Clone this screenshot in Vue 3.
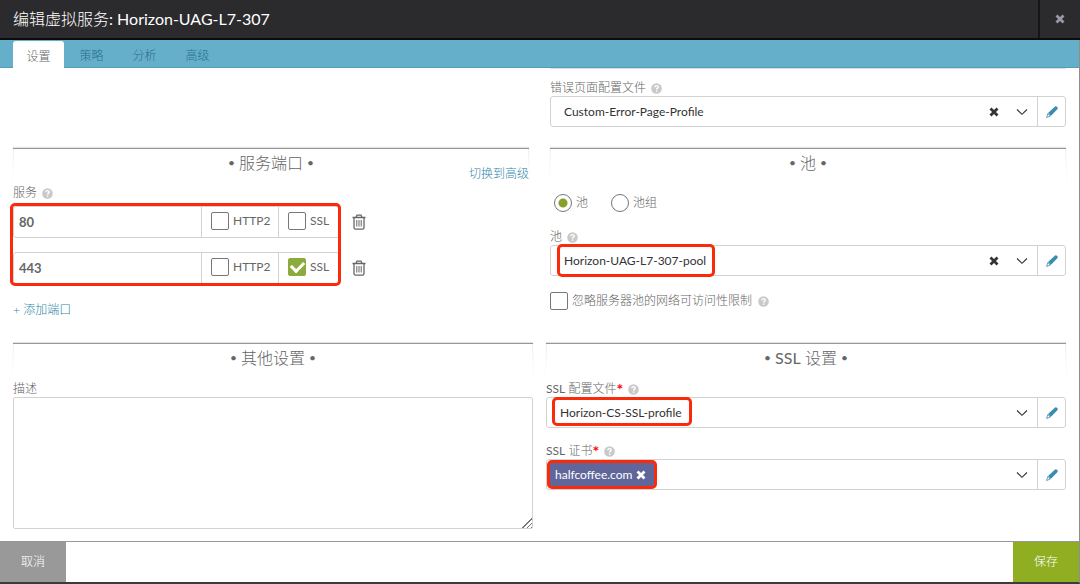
<script setup>
import { ref, reactive, h } from 'vue'

const tabs = ['设置', '策略', '分析', '高级']
const activeTab = ref('设置')
const ports = reactive([
  { port: '80', http2: false, ssl: false },
  { port: '443', http2: false, ssl: true },
])
const poolKind = ref('pool')
const ignoreReach = ref(false)
const description = ref('')

const stroke = (d, w) => h('path', { d, fill: 'none', stroke: 'currentColor', 'stroke-width': w })
const svg = (cls, size, kids) =>
  h('svg', { class: cls, width: size[0], height: size[1], viewBox: `0 0 ${size[0]} ${size[1]}`, 'aria-hidden': 'true' }, kids)

const HelpIcon = () =>
  svg('help', [11, 11], [
    h('circle', { cx: 5.5, cy: 5.5, r: 5.3, fill: '#c9c9c9' }),
    h('path', { d: 'M3.8 4.3C3.9 2 7.3 2.1 7.2 4.1C7.1 5.2 5.6 5.2 5.6 6.5', fill: 'none', stroke: '#fff', 'stroke-width': 1.4 }),
    h('rect', { x: 4.9, y: 7.4, width: 1.4, height: 1.4, fill: '#fff' }),
  ])
const CrossIcon = () => svg('cross', [10, 10], [stroke('M1.5 1.5L8.5 8.5M8.5 1.5L1.5 8.5', 2.8)])
const ChevronIcon = () => svg('chevron', [12, 8], [stroke('M1 1.5L6 6.3L11 1.5', 1.1)])
const PencilIcon = () =>
  svg('pencil', [12, 12], [
    h('path', { d: 'M2 7L8.5 0.9C9.4 0.1 10.4 0.2 11.2 1C12 1.8 11.9 2.7 11.1 3.6L4.8 10Z', fill: 'currentColor' }),
    h('path', { d: 'M1.8 7.6L4.2 10.1L0.6 11.5Z', fill: '#fff', stroke: 'currentColor', 'stroke-width': 0.8 }),
  ])
const TrashIcon = () =>
  svg('trash', [14, 16], [
    stroke('M0.5 3.5H13.5M4 3.2L5 1.2H9L10 3.2M2 4V13.5C2 14.6 2.6 15.2 3.6 15.2H10.4C11.4 15.2 12 14.6 12 13.5V4', 1.3),
    stroke('M4.8 6V12.5M7 6V12.5M9.2 6V12.5', 1),
  ])
</script>

<template>
  <div class="dialog">
    <header class="titlebar">
      <h1><span>编辑虚拟服务</span>: Horizon-UAG-L7-307</h1>
      <button type="button" class="close" aria-label="关闭"><CrossIcon /></button>
    </header>

    <nav class="tabs">
      <button
        v-for="t in tabs"
        :key="t"
        type="button"
        :class="{ active: t === activeTab }"
        @click="activeTab = t"
      >{{ t }}</button>
    </nav>

    <main class="body">
      <div class="row">
        <div></div>
        <div class="profile">
          <label class="caption" for="error-page">错误页面配置文件<HelpIcon /></label>
          <div class="field">
            <select id="error-page"><option>Custom-Error-Page-Profile</option></select>
            <button type="button" class="clear" aria-label="清除"><CrossIcon /></button>
            <ChevronIcon />
            <button type="button" class="edit" aria-label="编辑"><PencilIcon /></button>
          </div>
        </div>
      </div>

      <div class="row middle">
        <section>
          <div class="heading">
            <h2><i>•</i>服务端口<i>•</i></h2>
            <a href="#">切换到高级</a>
          </div>
          <div class="caption services">服务<HelpIcon /></div>
          <div class="ports">
            <div v-for="(p, i) in ports" :key="i" class="port-row">
              <div class="port">
                <input v-model="p.port" type="text" aria-label="服务端口" />
                <label class="http2"><input v-model="p.http2" type="checkbox" />HTTP2</label>
                <label class="ssl"><input v-model="p.ssl" type="checkbox" />SSL</label>
              </div>
              <button type="button" class="remove" aria-label="删除"><TrashIcon /></button>
            </div>
            <span class="mark mark-ports"></span>
          </div>
          <a href="#" class="add">+ 添加端口</a>
        </section>

        <section>
          <div class="heading"><h2><i>•</i>池<i>•</i></h2></div>
          <div class="radios">
            <label><input v-model="poolKind" type="radio" value="pool" />池</label>
            <label><input v-model="poolKind" type="radio" value="group" />池组</label>
          </div>
          <label class="caption" for="pool">池<HelpIcon /></label>
          <div class="field">
            <select id="pool"><option>Horizon-UAG-L7-307-pool</option></select>
            <button type="button" class="clear" aria-label="清除"><CrossIcon /></button>
            <ChevronIcon />
            <button type="button" class="edit" aria-label="编辑"><PencilIcon /></button>
            <span class="mark mark-pool"></span>
          </div>
          <label class="ignore">
            <input v-model="ignoreReach" type="checkbox" />忽略服务器池的网络可访问性限制<HelpIcon />
          </label>
        </section>
      </div>

      <div class="row last">
        <section>
          <div class="heading"><h2><i>•</i>其他设置<i>•</i></h2></div>
          <label class="caption" for="description">描述</label>
          <textarea id="description" v-model="description"></textarea>
        </section>

        <section>
          <div class="heading"><h2><i>•</i><span><em>SSL</em> 设置</span><i>•</i></h2></div>
          <label class="caption" for="ssl-profile"><span><em>SSL</em> 配置文件</span><b>*</b><HelpIcon /></label>
          <div class="field">
            <select id="ssl-profile"><option>Horizon-CS-SSL-profile</option></select>
            <ChevronIcon />
            <button type="button" class="edit" aria-label="编辑"><PencilIcon /></button>
            <span class="mark mark-profile"></span>
          </div>
          <label class="caption cert" for="ssl-cert"><span><em>SSL</em> 证书</span><b>*</b><HelpIcon /></label>
          <div class="field">
            <span class="chip">
              halfcoffee.com
              <button type="button" aria-label="移除"><CrossIcon /></button>
              <span class="mark mark-chip"></span>
            </span>
            <select id="ssl-cert"><option></option></select>
            <ChevronIcon />
            <button type="button" class="edit" aria-label="编辑"><PencilIcon /></button>
          </div>
        </section>
      </div>
    </main>

    <footer class="footer">
      <button type="button" class="cancel">取消</button>
      <button type="button" class="save">保存</button>
    </footer>
  </div>
</template>

<style>
body {
  margin: 0;
  background: #fff;
}
</style>

<style scoped>
.dialog,
.dialog :deep(*) {
  box-sizing: border-box;
}
.dialog {
  display: flex;
  flex-direction: column;
  min-height: 100vh;
  border-right: 1px solid #8e8e8e;
  border-bottom: 2px solid #3c3a3c;
  background: #fff;
  color: #666;
  font-family: Lato, "Noto Sans CJK SC", sans-serif;
  font-size: 12px;
  font-weight: 300;
  line-height: 16px;
}
button,
input,
select,
textarea {
  margin: 0;
  padding: 0;
  border: 0;
  background: none;
  color: inherit;
  font: inherit;
}
a {
  color: #2f87a8;
  text-decoration: none;
}
em {
  font-style: normal;
  font-weight: 400;
}
:deep(svg) {
  display: block;
  flex: none;
}

.titlebar {
  display: flex;
  height: 40px;
  margin-right: -1px;
  border-bottom: 2px solid #0c0c0d;
  background: #2b2b2d;
}
.titlebar h1 {
  flex: 1;
  margin: 0;
  padding-left: 13px;
  color: #fff;
  font-size: 16px;
  font-weight: 400;
  line-height: 38px;
}
.titlebar h1 span {
  font-weight: 300;
}
.close {
  display: grid;
  place-items: center;
  width: 42px;
  border-left: 2px solid #151516;
  color: #9a98a2;
}

.tabs {
  display: flex;
  align-items: flex-end;
  height: 28px;
  padding-left: 13px;
  border-bottom: 1px solid #4f9fbd;
  background: #66afcb;
}
.tabs button {
  width: 53px;
  height: 26px;
  padding-top: 4px;
  color: #256f8b;
}
.tabs button.active {
  width: 51px;
  margin: 0 1px -1px 0;
  height: 27px;
  border-radius: 3px 3px 0 0;
  background: #fff;
  color: #666;
}

.body {
  flex: 1;
  padding: 0 13px 12px;
}
.row {
  display: grid;
  grid-template-columns: 1fr 1fr;
  column-gap: 21px;
}
.row.middle {
  padding: 21px 0 25px;
}
.row.last {
  column-gap: 13px;
}
.profile {
  padding-top: 11px;
  border-top: 1px solid #ddd;
}

.heading {
  display: grid;
  height: 34px;
  border-top: 1px solid #969696;
  background:
    linear-gradient(#eee, #fff) 0 0 / 1px 22px no-repeat,
    linear-gradient(#eee, #fff) 100% 0 / 1px 22px no-repeat;
  box-shadow: 0 -1px 1px #e4e4e4;
}
.heading > * {
  grid-area: 1 / 1;
}
.heading h2 {
  display: flex;
  justify-content: center;
  gap: 4px;
  margin: 0;
  font-size: 16px;
  font-weight: 300;
  line-height: 28px;
}
.heading i {
  font-size: 12px;
  font-style: normal;
  font-weight: 400;
}
.heading a {
  place-self: end;
}

.caption {
  display: flex;
  align-items: center;
  height: 16px;
}
.caption :deep(.help) {
  margin-left: 5px;
}
.caption b {
  color: #f00;
  font-size: 16px;
  font-weight: 700;
}
.services {
  margin: 3px 0 5px;
}

.field {
  position: relative;
  display: flex;
  align-items: center;
  height: 31px;
  border: 1px solid #d2d2d2;
  border-radius: 3px;
  color: #333;
}
.field select {
  flex: 1;
  min-width: 0;
  height: 100%;
  padding-left: 13px;
  appearance: none;
  font-weight: 400;
}
.clear {
  display: grid;
  place-items: center;
  width: 20px;
  height: 20px;
  margin-right: 12px;
}
.field :deep(.chevron) {
  margin-right: 9px;
}
.edit {
  display: grid;
  place-items: center;
  width: 28px;
  height: 100%;
  border-left: 1px solid #d2d2d2;
  color: #3a8dae;
}

.mark {
  position: absolute;
  border: 3px solid #fb2a0b;
  border-radius: 5px;
  pointer-events: none;
}
.mark-ports {
  top: -3px;
  left: -3px;
  width: 331px;
  height: 83px;
}
.mark-pool {
  top: -2px;
  left: 6px;
  width: 158px;
  height: 33px;
}
.mark-profile {
  top: -1px;
  left: 5px;
  width: 140px;
  height: 29px;
}
.mark-chip {
  inset: -2px;
}

.ports {
  position: relative;
  display: grid;
  gap: 14px;
}
.port-row {
  display: flex;
  align-items: center;
  gap: 12px;
}
.port {
  display: flex;
  width: 327px;
  height: 32px;
  border: 1px solid #d2d2d2;
  border-radius: 3px;
}
.port input[type="text"] {
  flex: 1;
  min-width: 0;
  padding-left: 5px;
  color: #666;
  font-size: 13px;
  font-weight: 700;
}
.port label {
  display: flex;
  align-items: center;
  gap: 4px;
  padding: 0 0 2px 9px;
  border-left: 1px solid #d2d2d2;
  font-weight: 400;
}
.http2 {
  width: 77px;
}
.ssl {
  width: 61px;
}
.remove {
  color: #666;
}
.add {
  display: block;
  margin-top: 18px;
}

input[type="checkbox"] {
  flex: none;
  width: 18px;
  height: 18px;
  border: 1px solid #777;
  border-radius: 2px;
  appearance: none;
}
input[type="checkbox"]:checked {
  display: grid;
  place-items: center;
  border-color: #8cab3c;
  background: #8cab3c;
}
input[type="checkbox"]:checked::after {
  width: 10px;
  height: 6px;
  margin-bottom: 3px;
  border: solid #fff;
  border-width: 0 0 3px 3px;
  content: "";
  transform: rotate(-45deg);
}
input[type="radio"] {
  width: 18px;
  height: 18px;
  border: 1px solid #777;
  border-radius: 50%;
  appearance: none;
}
input[type="radio"]:checked {
  background: radial-gradient(circle, #86a02a 4px, #fff 5px);
}
.radios {
  display: flex;
  gap: 23px;
  margin: 12px 0 17px;
  padding-left: 4px;
}
.radios label {
  display: flex;
  align-items: center;
  gap: 4px;
  height: 18px;
}
.ignore {
  display: flex;
  align-items: center;
  gap: 4px;
  margin-top: 16px;
}
.ignore :deep(.help) {
  margin-left: 2px;
}

.last .caption {
  margin-top: 4px;
}
.last .cert {
  margin-top: 15px;
}
textarea {
  display: block;
  width: 100%;
  height: 132px;
  border: 1px solid #d2d2d2;
  border-radius: 2px;
  resize: vertical;
}
textarea::-webkit-resizer {
  background:
    linear-gradient(135deg, #fff 55%, transparent 55%),
    repeating-linear-gradient(135deg, #fff 0 2px, #777 2px 3px);
}
.chip {
  position: relative;
  display: flex;
  align-items: center;
  gap: 4px;
  height: 25px;
  margin-left: 2px;
  padding: 0 9px 0 6px;
  background: #60659a;
  color: #fff;
  font-weight: 400;
}

.footer {
  display: flex;
  justify-content: space-between;
  height: 41px;
  border-top: 1px solid #979797;
}
.footer button {
  width: 66px;
  color: #fff;
}
.cancel {
  background: #999;
}
.save {
  background: #8fae22;
}
</style>
